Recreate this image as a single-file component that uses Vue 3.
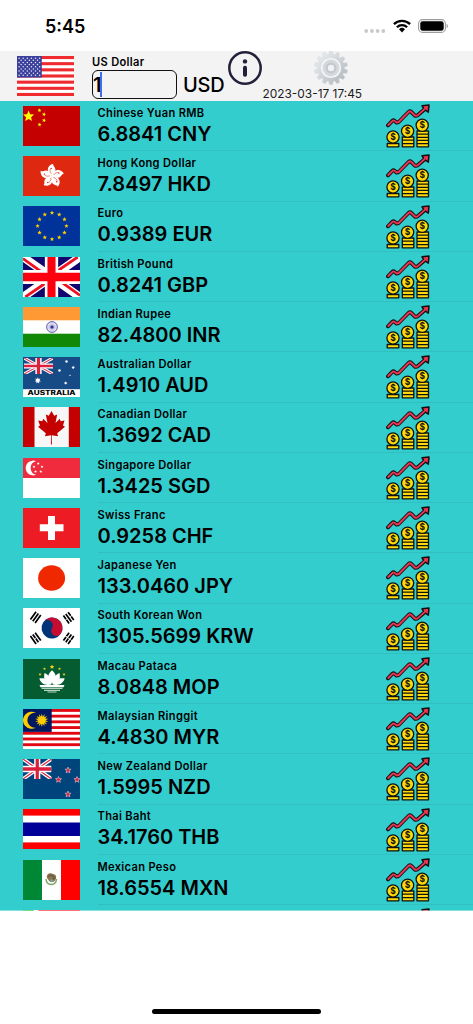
<template>
  <div class="screen">
    <svg class="defs" aria-hidden="true">
      <defs>
        <symbol id="union" viewBox="0 0 60 40" preserveAspectRatio="none">
          <rect width="60" height="40" fill="#12056d" />
          <path d="M0 0L60 40M60 0L0 40" stroke="#fff" stroke-width="8.5" />
          <path d="M0 1.6L27 20M60 38.4L33 20M57.6 0L30 18M2.4 40L30 22" stroke="#f01020" stroke-width="2.8" />
          <path d="M30 0V40M0 20H60" stroke="#fff" stroke-width="14" />
          <path d="M30 0V40M0 20H60" stroke="#fd0010" stroke-width="8.5" />
        </symbol>
        <symbol id="union-small" viewBox="0 0 60 40" preserveAspectRatio="none">
          <path d="M0 0L60 40M60 0L0 40" stroke="#fff" stroke-width="7.5" />
          <path d="M0 0L60 40M60 0L0 40" stroke="#dc2a45" stroke-width="2.6" />
          <path d="M30 0V40M0 20H60" stroke="#fff" stroke-width="13" />
          <path d="M30 0V40M0 20H60" stroke="#dc1f3c" stroke-width="6.8" />
        </symbol>
        <symbol id="flag-USD" viewBox="0 0 57 40">
          <rect width="57" height="40" fill="#fff" />
          <rect v-for="n in 7" :key="n" y="0" width="57" height="3.08" fill="#ef2b2f" :transform="`translate(0 ${(n - 1) * 6.154})`" />
          <rect width="24.8" height="21.5" fill="#3a3f9c" />
          <template v-for="r in 9" :key="r">
            <circle v-for="c in (r % 2 ? 6 : 5)" :key="c" :cx="c * 4.1 - (r % 2 ? 2 : 0)" :cy="r * 2.15" r=".75" fill="#e6e8f6" />
          </template>
        </symbol>
        <symbol id="flag-CNY" viewBox="0 0 57 40">
          <rect width="57" height="40" fill="#c50000" />
          <polygon :points="star(5.6, 10.4, 5.8)" fill="#ff0" />
          <polygon v-for="p in [[16.5, 4.3], [21, 8.3], [21, 14.3], [16.6, 18.6]]" :key="p[1]" :points="star(p[0], p[1], 2.1, 12)" fill="#ff0" />
        </symbol>
        <symbol id="flag-HKD" viewBox="0 0 57 40">
          <rect width="57" height="40" fill="#de2910" />
          <g transform="translate(28.8 20)">
            <g v-for="n in 5" :key="n" :transform="`rotate(${n * 72 - 72})`">
              <path d="M0 0C-6 -3 -5 -11 1.5 -12.2C.4 -10 4.8 -8.5 3.4 -4.8C2.8 -2.8 1.2 -2.4 0 0Z" fill="#fff" />
              <path d="M-.4 -2C-2.4 -4.2 -1.8 -6.5 -.8 -8" fill="none" stroke="#de2910" stroke-width=".5" />
              <circle cx="-.5" cy="-7.6" r=".65" fill="#de2910" />
            </g>
          </g>
        </symbol>
        <symbol id="flag-EUR" viewBox="0 0 57 40">
          <rect width="57" height="40" fill="#039" />
          <polygon v-for="n in 12" :key="n" :points="star(29 + 14.4 * Math.sin(n * Math.PI / 6), 20 - 13.2 * Math.cos(n * Math.PI / 6), 2.3)" fill="#fc0" />
        </symbol>
        <symbol id="flag-GBP" viewBox="0 0 57 40">
          <use href="#union" width="57" height="40" />
        </symbol>
        <symbol id="flag-INR" viewBox="0 0 57 40">
          <rect width="57" height="40" fill="#fff" />
          <rect width="57" height="13.3" fill="#f93" />
          <rect y="26.7" width="57" height="13.3" fill="#128807" />
          <g stroke="#33339c" fill="none">
            <circle cx="29" cy="20" r="5.4" stroke-width=".8" />
            <path v-for="n in 12" :key="n" d="M-5 0H5" stroke-width=".2" :transform="`translate(29 20) rotate(${n * 15})`" />
          </g>
          <circle cx="29" cy="20" r="1.6" fill="#33339c" />
        </symbol>
        <symbol id="flag-AUD" viewBox="0 0 57 40">
          <rect width="57" height="40" fill="#174b86" />
          <use href="#union-small" x="1" y="1" width="29" height="16" />
          <polygon :points="star7(14.8, 23.5, 3.3)" fill="#fff" />
          <polygon v-for="p in [[43.5, 4.5], [36.5, 13.5], [50.2, 10.5], [42.7, 26]]" :key="p[0]" :points="star7(p[0], p[1], 1.8)" fill="#fff" />
          <polygon :points="star(47, 18.3, 1)" fill="#fff" />
          <rect y="32.2" width="57" height="7.8" fill="#fff" />
          <text x="4.6" y="38.2" textLength="48" lengthAdjust="spacingAndGlyphs" font-size="5.6" font-weight="800" font-family="Inter, sans-serif">AUSTRALIA</text>
        </symbol>
        <symbol id="flag-CAD" viewBox="0 0 57 40">
          <rect width="57" height="40" fill="#f7f7f7" />
          <rect width="11.5" height="40" fill="#c40000" />
          <rect x="45.8" width="11.2" height="40" fill="#c40000" />
          <path d="M28.5 4L25.8 8.8L22.8 7.4L24.5 16L20.2 11.8L19.3 14.2L15.2 13.5L17 18.5L15 19.8L22.8 26.3L22 29.3L28 28.3L27.9 37.5H28.9L28.7 28.3L35 29.3L34.2 26.3L42 19.8L40 18.5L41.5 13.5L37.6 14.2L36.8 11.8L32.5 16L34.2 7.4L31.2 8.8Z" fill="#c40000" />
        </symbol>
        <symbol id="flag-SGD" viewBox="0 0 57 40">
          <rect width="57" height="40" fill="#fff" />
          <rect width="57" height="20" fill="#ef2b3d" />
          <path d="M13 3.2A7.4 7.4 0 1 0 13 16.8A7 7 0 0 1 13 3.2Z" fill="#fff" />
          <polygon v-for="p in [[15.2, 5.5], [19, 8.8], [11, 8.8], [12.5, 13.5], [17.8, 13.5]]" :key="p[0]" :points="star(p[0], p[1], 1.6)" fill="#fff" />
        </symbol>
        <symbol id="flag-CHF" viewBox="0 0 57 40">
          <rect width="57" height="40" fill="#ed1c24" />
          <path d="M25 8H32V16.3H40.5V23.3H32V32H25V23.3H16.8V16.3H25Z" fill="#fff" />
        </symbol>
        <symbol id="flag-JPY" viewBox="0 0 57 40">
          <rect width="57" height="40" fill="#fff" />
          <ellipse cx="28.6" cy="20" rx="13.5" ry="12.8" fill="#f02800" />
        </symbol>
        <symbol id="flag-KRW" viewBox="0 0 57 40">
          <rect width="57" height="40" fill="#fff" />
          <g transform="translate(29 20) rotate(32)">
            <circle r="10.5" fill="#003478" />
            <path d="M-10.5 0A10.5 10.5 0 0 1 10.5 0A5.25 5.25 0 0 1 0 0A5.25 5.25 0 0 0 -10.5 0Z" fill="#c60c30" />
          </g>
          <g stroke="#000" stroke-width="1.7">
            <path d="M-4.8 -2.9H4.8M-4.8 0H4.8M-4.8 2.9H4.8" transform="translate(12.6 9.3) rotate(-54)" />
            <path d="M-4.8 -2.9H-.4M.4 -2.9H4.8M-4.8 0H4.8M-4.8 2.9H-.4M.4 2.9H4.8" transform="translate(45.6 9.8) rotate(54)" />
            <path d="M-4.8 -2.9H4.8M-4.8 0H-.4M.4 0H4.8M-4.8 2.9H4.8" transform="translate(12.6 30.3) rotate(54)" />
            <path d="M-4.8 -2.9H-.4M.4 -2.9H4.8M-4.8 0H-.4M.4 0H4.8M-4.8 2.9H-.4M.4 2.9H4.8" transform="translate(45.6 30.3) rotate(-54)" />
          </g>
        </symbol>
        <symbol id="flag-MOP" viewBox="0 0 57 40">
          <rect width="57" height="40" fill="#055c30" />
          <polygon :points="star(29, 7.8, 2.4)" fill="#fbd116" />
          <polygon v-for="p in [[21.5, 9.8], [36.5, 9.8], [17, 15.4], [41, 15.4]]" :key="p[0]" :points="star(p[0], p[1], 1.6)" fill="#fbd116" />
          <path d="M29 11.3C23.5 16 24.5 21 29 24.5C33.5 21 34.5 16 29 11.3Z" fill="#fff" />
          <path d="M28.5 25C21 24 20.5 19 21.5 14C26 16 28.5 19.5 28.5 25ZM29.5 25C37 24 37.5 19 36.5 14C32 16 29.5 19.5 29.5 25Z" fill="#fff" />
          <path d="M16.3 19.5C22 18.5 26.5 21 28.5 25.5C22 27 18 24.5 16.3 19.5ZM41.7 19.5C36 18.5 31.5 21 29.5 25.5C36 27 40 24.5 41.7 19.5Z" fill="#fff" />
          <path d="M16.5 26H41.5L40.5 28.2H17.5Z" fill="#fff" />
          <path d="M18.5 29.3H39.5M21 31.3H37M24.5 33H33.5" stroke="#b9d3c5" stroke-width="1.2" />
        </symbol>
        <symbol id="flag-MYR" viewBox="0 0 57 40">
          <rect width="57" height="40" fill="#fff" />
          <rect v-for="n in 7" :key="n" width="57" height="2.86" fill="#e30613" :transform="`translate(0 ${(n - 1) * 5.71})`" />
          <rect width="28.7" height="22.9" fill="#00185f" />
          <path d="M13.2 4A8.6 8.6 0 1 0 13.2 18.5A7.4 7.4 0 1 1 13.2 4Z" fill="#fc0" />
          <path v-for="n in 14" :key="n" d="M-1.2 -2L0 -6.8L1.2 -2Z" fill="#fc0" :transform="`translate(18.8 11.2) rotate(${n * 25.714})`" />
          <circle cx="18.8" cy="11.2" r="3.4" fill="#fc0" />
        </symbol>
        <symbol id="flag-NZD" viewBox="0 0 57 40">
          <rect width="57" height="40" fill="#00447c" />
          <use href="#union-small" width="28.5" height="20" />
          <polygon v-for="p in [[45, 11.3], [35.5, 20.7], [54, 20.7], [45, 35.3]]" :key="p[0] + p[1]" :points="star(p[0], p[1], 3.2)" fill="#e0213c" stroke="#e8c7d3" stroke-width=".6" />
        </symbol>
        <symbol id="flag-THB" viewBox="0 0 57 40">
          <rect width="57" height="40" fill="#fff" />
          <rect width="57" height="6.6" fill="#f00" />
          <rect y="13.5" width="57" height="13.5" fill="#009" />
          <rect y="33.4" width="57" height="6.6" fill="#f00" />
        </symbol>
        <symbol id="flag-MXN" viewBox="0 0 57 40">
          <rect width="57" height="40" fill="#fff" />
          <rect width="19" height="40" fill="#008736" />
          <rect x="38" width="19" height="40" fill="#f00" />
          <path d="M23 19C23.5 26 33 26.5 33.5 19" fill="none" stroke="#7fa05a" stroke-width="1.4" />
          <path d="M24 18C23 14 27 12 30 14C33.5 14 34 18 32 20.5C30 23 26 22 25.5 20Z" fill="#93714a" />
          <path d="M25 16.5L28.5 15L31.5 18L28 21" fill="none" stroke="#55604a" stroke-width="1.2" />
          <circle cx="28.6" cy="20.6" r="1.6" fill="#6aa596" />
        </symbol>
        <symbol id="flag-TJS" viewBox="0 0 57 40">
          <rect width="57" height="40" fill="#fff" />
          <rect width="10.8" height="40" fill="#12c431" />
          <rect x="15.3" width="41.7" height="40" fill="#fb1620" />
        </symbol>
        <symbol id="growth" viewBox="0 0 44 44">
          <g fill="none" stroke-linejoin="round" stroke-linecap="round">
            <path d="M2 21.3L6.3 16.8Q7.5 15.9 8.7 16.9L10.5 18.5L12.7 18L22.5 8Q24 6.7 25.3 8L29.2 11.8L31.3 11.6L39 5" stroke="#111" stroke-width="3.9" />
            <path d="M36 1.8L43 .9L42.3 8.2L39.8 6.4L37.4 4Z" fill="#ed3555" stroke="#111" stroke-width="1.5" />
            <path d="M2.3 21L6.5 16.8Q7.5 15.9 8.7 16.9L10.5 18.5L12.7 18L22.5 8Q24 6.7 25.3 8L29.2 11.8L31.3 11.6L40.5 3.4" stroke="#ed3555" stroke-width="1.9" />
          </g>
          <g fill="#ffd90a" stroke="#111" stroke-width="1.3" stroke-linejoin="round">
            <path d="M1.2 39.5H12.8V42.8H1.2Z" />
            <path d="M16.3 33H27.8V42.8H16.3ZM16.3 36.2H27.8M16.3 39.6H27.8" />
            <path d="M31 27H42.5V42.8H31ZM31 30.2H42.5M31 33.3H42.5M31 36.4H42.5M31 39.6H42.5" />
            <circle cx="7" cy="33" r="6.1" />
            <circle cx="21.6" cy="27.2" r="6.1" />
            <circle cx="36.2" cy="21.3" r="6.1" />
          </g>
          <g font-family="Inter, sans-serif" font-size="8.5" font-weight="700" text-anchor="middle" fill="#111">
            <text x="7" y="36.1">$</text>
            <text x="21.6" y="30.3">$</text>
            <text x="36.2" y="24.4">$</text>
          </g>
        </symbol>
      </defs>
    </svg>

    <div class="status-bar">
      <span class="time">5:45</span>
      <div class="status-icons">
        <svg class="signal" viewBox="0 0 22 4">
          <circle v-for="n in 4" :key="n" :cx="n * 5.7 - 3.5" cy="2" r="1.9" fill="#c9c9c9" />
        </svg>
        <svg class="wifi" viewBox="0 0 18 14">
          <g fill="none" stroke="#000" stroke-width="2.3">
            <path d="M.9 5.1A11.6 11.6 0 0 1 17.1 5.1" />
            <path d="M3.9 8.2A7.3 7.3 0 0 1 14.1 8.2" />
          </g>
          <path d="M6 10.2A4.3 4.3 0 0 1 12 10.2L9 13.4Z" />
        </svg>
        <svg class="battery" viewBox="0 0 30 14">
          <rect x=".6" y=".6" width="26.8" height="12.8" rx="4" fill="none" stroke="#9d9d9d" stroke-width="1.1" />
          <rect x="2.3" y="2.2" width="23.4" height="9.6" rx="2.4" />
          <path d="M28.6 4.8Q30 5.5 30 7T28.6 9.2Z" fill="#9d9d9d" />
        </svg>
      </div>
    </div>

    <div class="base">
      <svg class="flag"><use href="#flag-USD" /></svg>
      <div class="base-info">
        <div class="name">US Dollar</div>
        <div class="base-line">
          <div class="amount">{{ amount }}<span class="caret"></span></div>
          <span class="code">USD</span>
        </div>
      </div>
      <svg class="info-icon" viewBox="0 0 34 34">
        <circle cx="17" cy="17" r="15.7" fill="none" stroke="#23213a" stroke-width="2.5" />
        <circle cx="17" cy="10.4" r="2.2" fill="#23213a" />
        <rect x="15" y="14.7" width="4" height="11" rx="1.8" fill="#23213a" />
      </svg>
      <div class="update">
        <svg class="gear" viewBox="0 0 34 34">
          <defs>
            <linearGradient id="metal" x1="0" y1="0" x2="1" y2="1">
              <stop offset="0" stop-color="#f0f2f3" />
              <stop offset=".5" stop-color="#d0d4d8" />
              <stop offset="1" stop-color="#a9b0b7" />
            </linearGradient>
          </defs>
          <g fill="url(#metal)">
            <path :d="gearPath" stroke="#d3d8dc" stroke-width=".5" />
          </g>
          <circle cx="17" cy="17" r="9.3" fill="#d6d9dc" stroke="#f6f7f8" stroke-width="1.6" />
          <circle cx="17" cy="17" r="4.3" fill="#f1f2f3" stroke="#c2c8cd" stroke-width="2.2" />
        </svg>
        <div class="stamp">2023-03-17 17:45</div>
      </div>
    </div>

    <div class="list">
      <div v-for="item in rates" :key="item.code" class="row">
        <svg class="flag"><use :href="'#flag-' + item.code" /></svg>
        <div class="detail">
          <div class="text">
            <div class="name">{{ item.name }}</div>
            <div class="value">{{ item.rate }} {{ item.code }}</div>
          </div>
          <svg class="growth"><use href="#growth" /></svg>
        </div>
      </div>
      <div class="row">
        <svg class="flag"><use href="#flag-TJS" /></svg>
        <div class="detail">
          <div class="text"></div>
          <svg class="growth"><use href="#growth" /></svg>
        </div>
      </div>
    </div>

    <div class="home-bar"></div>
  </div>
</template>

<script setup>
import { ref } from 'vue';

const amount = ref('1');

const rates = ref([
  { name: 'Chinese Yuan RMB', rate: '6.8841', code: 'CNY' },
  { name: 'Hong Kong Dollar', rate: '7.8497', code: 'HKD' },
  { name: 'Euro', rate: '0.9389', code: 'EUR' },
  { name: 'British Pound', rate: '0.8241', code: 'GBP' },
  { name: 'Indian Rupee', rate: '82.4800', code: 'INR' },
  { name: 'Australian Dollar', rate: '1.4910', code: 'AUD' },
  { name: 'Canadian Dollar', rate: '1.3692', code: 'CAD' },
  { name: 'Singapore Dollar', rate: '1.3425', code: 'SGD' },
  { name: 'Swiss Franc', rate: '0.9258', code: 'CHF' },
  { name: 'Japanese Yen', rate: '133.0460', code: 'JPY' },
  { name: 'South Korean Won', rate: '1305.5699', code: 'KRW' },
  { name: 'Macau Pataca', rate: '8.0848', code: 'MOP' },
  { name: 'Malaysian Ringgit', rate: '4.4830', code: 'MYR' },
  { name: 'New Zealand Dollar', rate: '1.5995', code: 'NZD' },
  { name: 'Thai Baht', rate: '34.1760', code: 'THB' },
  { name: 'Mexican Peso', rate: '18.6554', code: 'MXN' }
]);

const starPoints = (cx, cy, r, tips, inner, rot) => {
  const pts = [];
  for (let i = 0; i < tips * 2; i++) {
    const a = (i * Math.PI) / tips + (rot * Math.PI) / 180;
    const d = i % 2 ? r * inner : r;
    pts.push(`${(cx + d * Math.sin(a)).toFixed(2)},${(cy - d * Math.cos(a)).toFixed(2)}`);
  }
  return pts.join(' ');
};

const star = (cx, cy, r, rot = 0) => starPoints(cx, cy, r, 5, 0.45, rot);
const star7 = (cx, cy, r) => starPoints(cx, cy, r, 7, 0.5, 0);

// 14 teeth, each one a small trapezoid
const teeth = [];
for (let i = 0; i < 14; i++) {
  for (const [offset, r] of [[-0.17, 13.6], [-0.09, 16.8], [0.09, 16.8], [0.17, 13.6]]) {
    const a = (i * Math.PI) / 7 + offset;
    teeth.push(`${(17 + r * Math.sin(a)).toFixed(2)} ${(17 - r * Math.cos(a)).toFixed(2)}`);
  }
}
const gearPath = 'M' + teeth.join('L') + 'Z';
</script>

<style>
body {
  margin: 0;
  background: #fff;
}
</style>

<style scoped>
.screen {
  position: relative;
  width: 473px;
  height: 1024px;
  overflow: hidden;
  background: #fff;
  color: #000;
  font-family: Inter, "Liberation Sans", sans-serif;
}

.screen svg {
  display: block;
  flex: none;
}

.screen .defs {
  position: absolute;
  width: 0;
  height: 0;
}

.status-bar {
  display: flex;
  justify-content: space-between;
  height: 51px;
  padding: 0 25px 0 45px;
  box-sizing: border-box;
}

.time {
  margin-top: 15px;
  font-size: 18px;
  line-height: 23px;
  font-weight: 600;
}

.status-icons {
  display: flex;
  align-items: flex-start;
}

.signal {
  width: 22px;
  height: 4px;
  margin: 29px 7px 0 0;
}

.wifi {
  width: 18px;
  height: 14px;
  margin: 19px 7px 0 0;
}

.battery {
  width: 30px;
  height: 14px;
  margin-top: 19px;
}

.base {
  display: flex;
  height: 50px;
  background: #f3f3f3;
}

.flag {
  width: 57px;
  height: 40px;
}

.base .flag {
  margin: 5px 18px 0 17px;
}

.base-info {
  width: 136px;
  padding-top: 4px;
}

.name {
  font-size: 11.1px;
  line-height: 15px;
  font-weight: 600;
  letter-spacing: 0.33px;
  white-space: nowrap;
}

.base-line {
  display: flex;
  align-items: center;
}

.amount {
  display: flex;
  align-items: center;
  width: 85px;
  height: 29px;
  box-sizing: border-box;
  border: 1px solid #111;
  border-radius: 6px;
  font-size: 20px;
  font-weight: 600;
}

.caret {
  width: 2px;
  height: 25px;
  margin-left: -1px;
  background: #3f6cf0;
}

.code {
  margin-left: 6px;
  font-size: 20px;
  line-height: 24px;
  font-weight: 550;
  letter-spacing: -0.2px;
}

.info-icon {
  width: 34px;
  height: 34px;
}

.gear {
  width: 34px;
  height: 34px;
  margin-left: 52px;
}

.stamp {
  margin-left: 0.5px;
  font-size: 11.9px;
  line-height: 17px;
  color: #1c1c1c;
  white-space: nowrap;
}

.list {
  position: relative;
  height: 810px;
  overflow: hidden;
  background: #34cdce;
}

.list::after {
  content: "";
  position: absolute;
  left: 0;
  right: 0;
  bottom: 0;
  height: 1px;
  background: rgba(255, 255, 255, 0.4);
}

.row {
  display: flex;
  height: 50.25px;
  padding-left: 23px;
}

.row .flag {
  margin-top: 4.9px;
}

.detail {
  display: flex;
  flex: 1;
  margin-left: 17.5px;
  box-sizing: border-box;
  border-bottom: 1px solid #32bfc1;
}

.text {
  width: 288.5px;
  padding-top: 4.8px;
}

.value {
  font-size: 20px;
  line-height: 26px;
  font-weight: 600;
  white-space: nowrap;
}

.growth {
  width: 44px;
  height: 44px;
  margin-top: 3px;
}

.home-bar {
  width: 169px;
  height: 5px;
  margin: 98px auto 0;
  border-radius: 3px;
  background: #000;
}
</style>
